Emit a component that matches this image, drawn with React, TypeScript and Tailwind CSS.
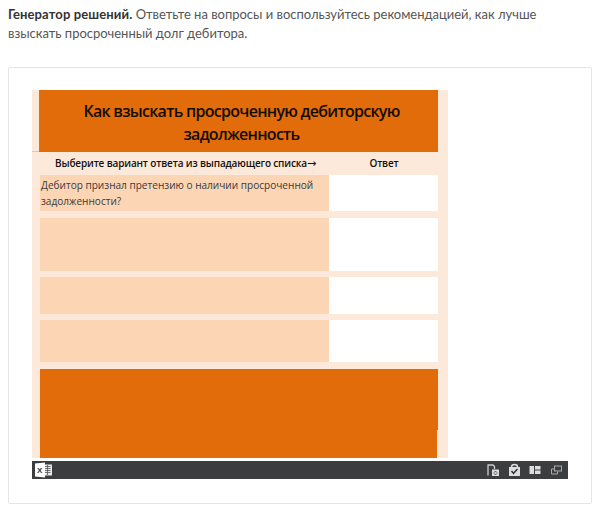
export default function App() {
  return (
    <div className="w-[600px] h-[507px] bg-white overflow-hidden font-['Open_Sans',sans-serif]">
      <p className="px-2 pt-[5px] text-[13px] leading-[19px] text-[#555] w-[560px] font-['Lato',sans-serif]">
        <b className="text-[#333] tracking-[0.12px]">Генератор решений.</b> <span className="tracking-[-0.02px]">Ответьте на вопросы и воспользуйтесь рекомендацией, как лучше взыскать просроченный долг дебитора.</span>
      </p>
      <div className="mx-2 mt-[24px] h-[437px] border border-[#e4e4e4] rounded-[2px] pl-[23px] pt-[22px]">
        <div className="w-[536px]">
          <div className="w-[416px] h-[368px] bg-[#fde9d9] flex">
            <div className="w-[7px] h-[62px] border-b border-b-[#c5d3b8] shrink-0" />
            <div className="w-[399px]">
              <div className="h-[62px] bg-[#e36c0a] border-l border-l-[#6f9a6a] flex items-center justify-center text-center text-[16px] leading-[23px] font-semibold tracking-[-0.72px] text-[#120c04] pl-[5px]">
                <span className="w-[380px] pt-[3px]">Как взыскать просроченную дебиторскую задолженность</span>
              </div>
              <div className="w-[398px] ml-px flex flex-col">
                <div className="h-[23px] flex items-center text-[10px] tracking-[-0.15px] font-semibold text-[#111]">
                  <span className="w-[289px] pl-[15px] whitespace-nowrap">Выберите вариант ответа из выпадающего списка<span className="font-['DejaVu_Sans',sans-serif] font-normal text-[11px] leading-[10px]">→</span></span>
                  <span className="w-[109px] text-center pl-[1px]">Ответ</span>
                </div>
                <div className="h-[36px] flex">
                  <div className="w-[289px] bg-[#fcd5b4] px-[1px] pt-[2px] text-[10.07px] leading-[16px] text-[#3a3a3a]">Дебитор признал претензию о наличии просроченной задолженности?</div>
                  <div className="flex-1 bg-white" />
                </div>
                <div className="h-[53px] mt-[7px] flex">
                  <div className="w-[289px] bg-[#fcd5b4]" />
                  <div className="flex-1 bg-white" />
                </div>
                <div className="h-[37px] mt-[6px] flex">
                  <div className="w-[289px] bg-[#fcd5b4]" />
                  <div className="flex-1 bg-white" />
                </div>
                <div className="h-[42px] mt-[6px] flex">
                  <div className="w-[289px] bg-[#fcd5b4]" />
                  <div className="flex-1 bg-white" />
                </div>
                <div className="h-[61px] mt-[7px] bg-[#e36c0a]" />
                <div className="h-[28px] w-[397px] bg-[#e36c0a]" />
              </div>
            </div>
          </div>
          <div className="mt-[3px] h-[18px] bg-[#3c3d3f] flex items-center justify-between pl-[2px] pr-[6px]">
            <svg width="19" height="16" viewBox="0 0 19 16">
              <rect x="9" y="2.500" width="9" height="11" fill="#e8e8e8" />
              <path d="M10.500 4.500h6M10.500 6.500h6M10.500 8.500h6M10.500 10.500h6M13.500 3v10" stroke="#555" strokeWidth="0.800" />
              <path d="M1 1.500 L11 0.500 V15.500 L1 14.500 Z" fill="#fff" />
              <text x="3" y="11" fontSize="8" fontWeight="700" fill="#333" fontFamily="Liberation Sans">X</text>
            </svg>
            <div className="flex items-center gap-[8px]">
              <svg width="13" height="14" viewBox="0 0 13 14" fill="none">
                <path d="M1 12.500V2h5l1.500 1.500V6" stroke="#ccc" strokeWidth="1.300" />
                <rect x="5" y="6.500" width="7" height="6.500" fill="#ddd" />
                <path d="M7 9.500a1.700 1.700 0 0 1 3 0M10 10.500a1.700 1.700 0 0 1-3 0" stroke="#444" strokeWidth="1" />
              </svg>
              <svg width="13" height="14" viewBox="0 0 13 14" fill="none">
                <path d="M1 4h11v9H1z" fill="#ddd" />
                <path d="M3.500 4a3 2.500 0 0 1 6 0" stroke="#ddd" strokeWidth="1.500" />
                <path d="M3.500 8l2 2.300 4-4.300" stroke="#333" strokeWidth="1.500" />
              </svg>
              <svg width="12" height="10" viewBox="0 0 12 10">
                <rect x="0.500" y="1" width="4.500" height="8" fill="#ddd" />
                <rect x="6" y="1" width="5.500" height="3.500" fill="#ddd" />
                <rect x="6" y="5.500" width="5.500" height="3.500" fill="#ddd" />
              </svg>
              <svg className="ml-[2px]" width="11" height="10" viewBox="0 0 11 10" fill="none">
                <rect x="3.500" y="1" width="7" height="5" stroke="#aaa" />
                <path d="M3 4H.500v5h6V6.500" stroke="#aaa" />
              </svg>
            </div>
          </div>
        </div>
      </div>
    </div>
  );
}
